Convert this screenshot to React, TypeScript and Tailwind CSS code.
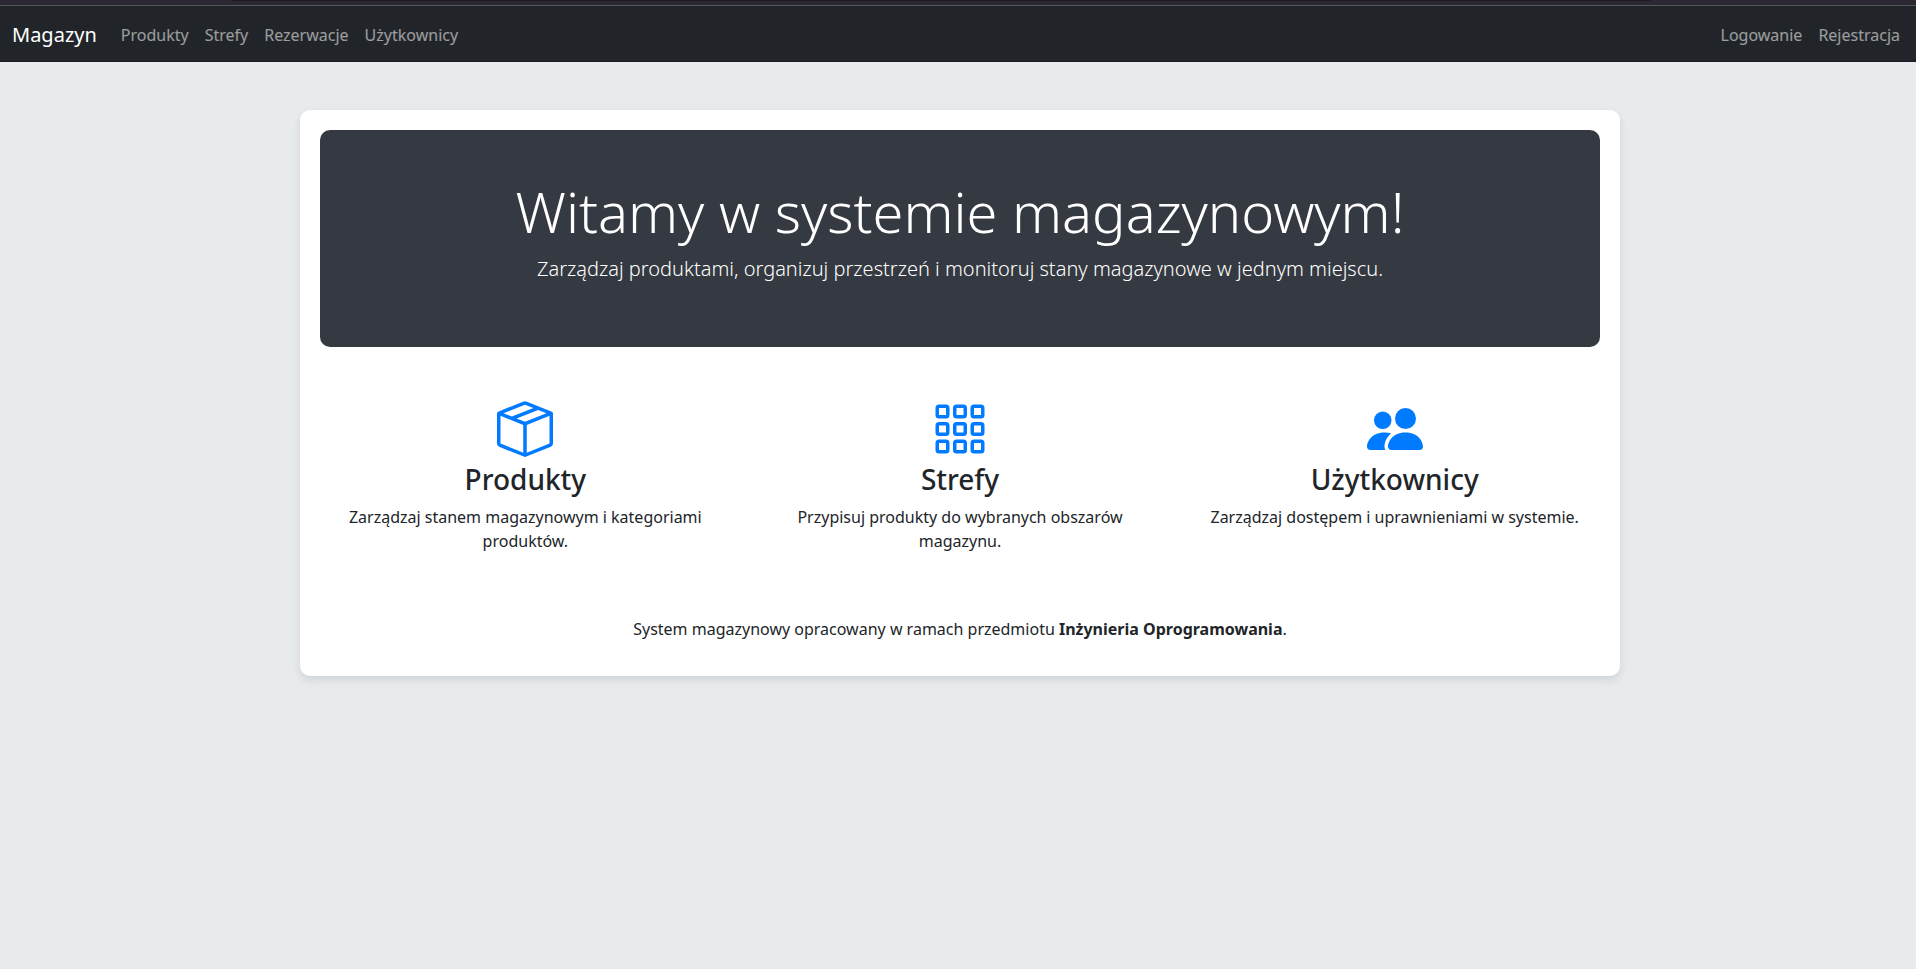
import { BsBoxSeam, BsGrid3X3Gap, BsPeopleFill } from "react-icons/bs";
import type { ReactNode } from "react";

function Feature({ icon, title, children }: { icon: ReactNode; title: string; children: ReactNode }) {
  return (
    <div className="flex-1 px-6 text-center">
      <div className="flex h-[76px] justify-center pt-[14px] text-[56px] leading-none text-[#007bff]">{icon}</div>
      <h3 className="mb-2 text-[28px] font-medium leading-[33.6px]">{title}</h3>
      <p className="mb-4">{children}</p>
    </div>
  );
}

export default function App() {
  return (
    <div className="min-h-[969px] bg-[#e8ebee] font-['Noto_Sans',sans-serif] text-base leading-6 text-[#212529]">
      <div className="h-[6px] border-b border-[#56555c] bg-[#2b2833]">
        <div className="ml-[233px] h-px w-[1418px] bg-[#1c1b22]" />
      </div>
      <nav className="flex h-[56px] items-center border-b border-[#1d1e24] bg-[#212529] px-3 pt-[2px] text-white/55">
        <a className="mr-4 text-xl leading-[30px] text-white">Magazyn</a>
        <div className="flex flex-1">
          <a className="px-2">Produkty</a>
          <a className="px-2">Strefy</a>
          <a className="px-2">Rezerwacje</a>
          <a className="px-2">Użytkownicy</a>
        </div>
        <a className="px-2">Logowanie</a>
        <a className="pl-2 pr-1">Rejestracja</a>
      </nav>
      <main className="ml-[300px] mt-12 h-[566px] w-[1320px] rounded-[10px] bg-white p-5 shadow-[0_4px_8px_rgba(0,0,0,0.1)]">
        <section className="h-[217px] rounded-[10px] bg-[#353941] pt-12 text-center text-white">
          <h1 className="mb-2 text-[56px] font-light leading-[67.2px]">Witamy w systemie magazynowym!</h1>
          <p className="pt-px text-xl font-light leading-[30px]">Zarządzaj produktami, organizuj przestrzeń i monitoruj stany magazynowe w jednym miejscu.</p>
        </section>
        <section className="-mx-3 mt-[40px] flex h-[230px]">
          <Feature icon={<BsBoxSeam />} title="Produkty">Zarządzaj stanem magazynowym i kategoriami produktów.</Feature>
          <Feature icon={<BsGrid3X3Gap />} title="Strefy">Przypisuj produkty do wybranych obszarów magazynu.</Feature>
          <Feature icon={<BsPeopleFill />} title="Użytkownicy">Zarządzaj dostępem i uprawnieniami w systemie.</Feature>
        </section>
        <p className="text-center">System magazynowy opracowany w ramach przedmiotu <strong>Inżynieria Oprogramowania</strong>.</p>
      </main>
    </div>
  );
}
